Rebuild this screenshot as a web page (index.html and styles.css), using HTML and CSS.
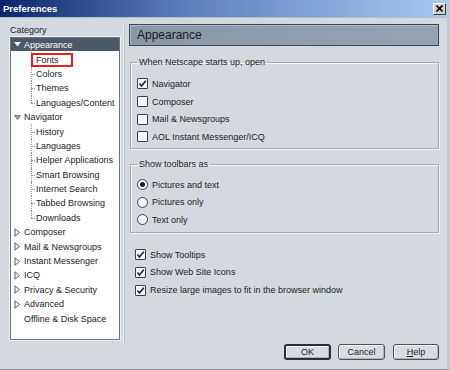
FILE: index.html
```html
<!DOCTYPE html>
<html lang="en">
<head>
    <meta charset="UTF-8">
    <title>Preferences</title>
    <link rel="stylesheet" href="styles.css">
</head>
<body>
    <div class="window">
        <div class="titlebar">
            <span class="title">Preferences</span>
            <span class="close">
                <svg width="7" height="7" viewBox="0 0 7 7"><path d="M0.5 0.5 L6.5 6.5 M6.5 0.5 L0.5 6.5" stroke="#000" stroke-width="1.6"/></svg>
            </span>
        </div>
        <div class="main">
            <div class="sidebar">
                <div class="cat-label">Category</div>
                <ul class="tree">
                    <li class="row top selected"><svg class="twisty" width="7" height="5" viewBox="0 0 7 5"><polygon points="0,0 7,0 3.5,4.5" fill="#e8ecf0"/></svg>Appearance</li>
                    <li class="row child"><span class="mark">Fonts</span></li>
                    <li class="row child">Colors</li>
                    <li class="row child">Themes</li>
                    <li class="row child last">Languages/Content</li>
                    <li class="row top"><svg class="twisty" width="7" height="5" viewBox="0 0 7 5"><polygon points="0.5,0.5 6.5,0.5 3.5,4.5" fill="#9aa2ac" stroke="#5b636d" stroke-width="0.8"/></svg>Navigator</li>
                    <li class="row child">History</li>
                    <li class="row child">Languages</li>
                    <li class="row child">Helper Applications</li>
                    <li class="row child">Smart Browsing</li>
                    <li class="row child">Internet Search</li>
                    <li class="row child">Tabbed Browsing</li>
                    <li class="row child last">Downloads</li>
                    <li class="row top"><svg class="twisty" width="7" height="9" viewBox="0 0 7 9"><polygon points="1,0.8 5.5,4.5 1,8.2" fill="#fff" stroke="#555c66" stroke-width="1"/></svg>Composer</li>
                    <li class="row top"><svg class="twisty" width="7" height="9" viewBox="0 0 7 9"><polygon points="1,0.8 5.5,4.5 1,8.2" fill="#fff" stroke="#555c66" stroke-width="1"/></svg>Mail &amp; Newsgroups</li>
                    <li class="row top"><svg class="twisty" width="7" height="9" viewBox="0 0 7 9"><polygon points="1,0.8 5.5,4.5 1,8.2" fill="#fff" stroke="#555c66" stroke-width="1"/></svg>Instant Messenger</li>
                    <li class="row top"><svg class="twisty" width="7" height="9" viewBox="0 0 7 9"><polygon points="1,0.8 5.5,4.5 1,8.2" fill="#fff" stroke="#555c66" stroke-width="1"/></svg>ICQ</li>
                    <li class="row top"><svg class="twisty" width="7" height="9" viewBox="0 0 7 9"><polygon points="1,0.8 5.5,4.5 1,8.2" fill="#fff" stroke="#555c66" stroke-width="1"/></svg>Privacy &amp; Security</li>
                    <li class="row top"><svg class="twisty" width="7" height="9" viewBox="0 0 7 9"><polygon points="1,0.8 5.5,4.5 1,8.2" fill="#fff" stroke="#555c66" stroke-width="1"/></svg>Advanced</li>
                    <li class="row top"><span class="twisty"></span>Offline &amp; Disk Space</li>
                </ul>
            </div>

            <div class="content">
                <div class="panel-head">Appearance</div>

                <fieldset class="group first">
                    <legend>When Netscape starts up, open</legend>
                    <div class="opt"><span class="check"><svg width="9" height="9" viewBox="0 0 9 9"><path d="M1.5 4.5 L3.5 7 L7.8 1.8" fill="none" stroke="#1e2226" stroke-width="1.6"/></svg></span>Navigator</div>
                    <div class="opt"><span class="check"></span>Composer</div>
                    <div class="opt"><span class="check"></span>Mail &amp; Newsgroups</div>
                    <div class="opt"><span class="check"></span>AOL Instant Messenger/ICQ</div>
                </fieldset>

                <fieldset class="group second">
                    <legend>Show toolbars as</legend>
                    <div class="opt"><span class="radio on"></span>Pictures and text</div>
                    <div class="opt"><span class="radio"></span>Pictures only</div>
                    <div class="opt"><span class="radio"></span>Text only</div>
                </fieldset>

                <div class="extras">
                    <div class="opt"><span class="check"><svg width="9" height="9" viewBox="0 0 9 9"><path d="M1.5 4.5 L3.5 7 L7.8 1.8" fill="none" stroke="#1e2226" stroke-width="1.6"/></svg></span>Show Tooltips</div>
                    <div class="opt"><span class="check"><svg width="9" height="9" viewBox="0 0 9 9"><path d="M1.5 4.5 L3.5 7 L7.8 1.8" fill="none" stroke="#1e2226" stroke-width="1.6"/></svg></span>Show Web Site Icons</div>
                    <div class="opt"><span class="check"><svg width="9" height="9" viewBox="0 0 9 9"><path d="M1.5 4.5 L3.5 7 L7.8 1.8" fill="none" stroke="#1e2226" stroke-width="1.6"/></svg></span>Resize large images to fit in the browser window</div>
                </div>
            </div>
        </div>

        <div class="buttons">
            <button class="btn default">OK</button>
            <button class="btn">Cancel</button>
            <button class="btn help"><u>H</u>elp</button>
        </div>
    </div>
</body>
</html>
```

FILE: styles.css
```css
body {
    margin: 0;
    background-color: #d4d9df;
    font-family: "Liberation Sans", Arial, sans-serif;
    font-size: 9px;
    color: #1a1d21;
}
.window {
    width: 450px;
    height: 370px;
    box-sizing: border-box;
    background-color: #d4d9df;
    border-right: 3px solid #c4c9cf;
    border-bottom: 1px solid #8a9098;
    display: flex;
    flex-direction: column;
}
.titlebar {
    height: 17px;
    flex: none;
    display: flex;
    align-items: center;
    justify-content: space-between;
    padding: 0 1px 0 3px;
    background: linear-gradient(to right, #0a246a 0%, #5b7cbc 40%, #a6caf0 100%);
    border-bottom: 1px solid #b6bcc4;
}
.title {
    color: white;
    font-weight: bold;
    font-size: 9.5px;
}
.close {
    width: 13px;
    height: 12px;
    box-sizing: border-box;
    background-color: #d4d0c8;
    border: 1px solid;
    border-color: #fff #404040 #404040 #fff;
    display: flex;
    align-items: center;
    justify-content: center;
}
.main {
    flex: 1;
    display: flex;
    padding: 6px 8px 0 10px;
}
.sidebar {
    width: 110px;
    flex: none;
}
.cat-label {
    height: 13px;
    line-height: 13px;
}
.tree {
    list-style: none;
    margin: 0;
    padding: 0;
    height: 303px;
    box-sizing: border-box;
    background: white;
    border: 1px solid #6d757f;
    box-shadow: 0 0 0 1px #eef0f3;
}
.row {
    height: 14.4px;
    display: flex;
    align-items: center;
    white-space: nowrap;
    position: relative;
}
.row.top {
    padding-left: 3px;
}
.twisty {
    width: 7px;
    margin-right: 3px;
    flex: none;
}
.row.selected {
    background-color: #4d5866;
    color: white;
    height: 13px;
    margin-bottom: 1.4px;
}
.row.child {
    padding-left: 25px;
}
.row.child::before {
    content: "";
    position: absolute;
    left: 20px;
    top: 0;
    bottom: 0;
    border-left: 1px dotted #8c939b;
}
.row.child.last::before {
    bottom: 50%;
}
.row.child::after {
    content: "";
    position: absolute;
    left: 20px;
    top: 50%;
    width: 4px;
    border-top: 1px dotted #8c939b;
}
.mark {
    display: inline-block;
    margin-left: -5px;
    padding: 0 12px 0 3px;
    height: 10px;
    line-height: 10px;
    border: 2px solid #e3221f;
    position: relative;
    z-index: 1;
    background: white;
}
.content {
    flex: 1;
    margin-left: 3px;
    padding-left: 5px;
    border-left: 1px solid #e9ecef;
    box-shadow: inset 1px 0 0 #bfc5cc;
}
.panel-head {
    height: 22px;
    box-sizing: border-box;
    line-height: 20px;
    padding-left: 7px;
    font-size: 12px;
    color: #15181c;
    background: linear-gradient(to right, #8a97a6, #96a2b0);
    border: 1px solid #3d4752;
    box-shadow: inset 1px 1px 0 #b3bcc6;
}
.group {
    margin: 11px 0 0 1px;
    padding: 7px 6px 2px 6px;
    border: 1px solid #a3abb5;
    box-shadow: inset 1px 1px 0 #f2f4f6, 1px 1px 0 #f2f4f6;
}
.group.second {
    margin-top: 10px;
    padding-top: 6px;
    padding-bottom: 3px;
}
.group legend {
    padding: 0 2px;
    line-height: 11px;
}
.opt {
    height: 17.7px;
    display: flex;
    align-items: center;
    white-space: nowrap;
}
.check, .radio {
    width: 11px;
    height: 11px;
    box-sizing: border-box;
    border: 1px solid #3b4148;
    background-color: #f3f5f7;
    margin-right: 4px;
    display: flex;
    align-items: center;
    justify-content: center;
    flex: none;
}
.check {
    border-radius: 1px;
}
.radio {
    border-radius: 50%;
}
.radio.on::after {
    content: "";
    width: 5px;
    height: 5px;
    border-radius: 50%;
    background-color: #1e2226;
}
.extras {
    margin-top: 13px;
    padding-left: 6px;
}
.buttons {
    display: flex;
    justify-content: flex-end;
    gap: 7px;
    padding: 0 8px 9px 0;
}
.btn {
    width: 47px;
    height: 16px;
    padding: 0;
    font-family: "Liberation Sans", Arial, sans-serif;
    font-size: 9px;
    color: #1a1d21;
    background-color: #d9dde2;
    border: 1px solid #4a5058;
    border-radius: 3px;
    box-shadow: inset 1px 1px 0 #f4f6f8, inset -1px -1px 0 #aab1b9;
}
.btn.default {
    border: 2px solid #2b3036;
}
.btn.help {
    width: 46px;
    margin-left: 1px;
}
```
